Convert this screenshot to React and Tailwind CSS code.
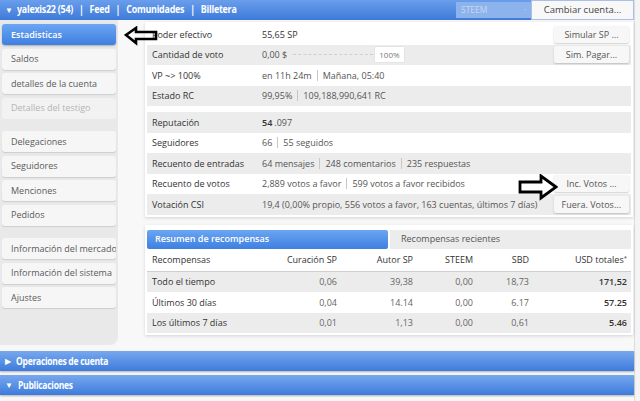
import React from 'react';

const font = { fontFamily: "'Open Sans', 'Liberation Sans', sans-serif" };

const Sep = () => <span className="inline-block w-px h-[11px] bg-[#c8c8c8] mx-[5px] align-[-2px]"></span>;

const SideBtn = ({ children, active, disabled, className = '' }) => (
  <div
    className={`mx-[2px] h-[21px] flex items-center pl-[9px] rounded-[3px] text-[9px] whitespace-nowrap overflow-hidden ${
      active
        ? 'bg-gradient-to-b from-[#6aa6f2] to-[#3f7fe0] text-white font-semibold shadow-[0_1px_2px_rgba(0,0,0,0.25)]'
        : disabled
        ? 'bg-[#f2f2f2] text-[#b5b5b5]'
        : 'bg-[#f6f6f6] text-[#5a5a5a] shadow-[0_1px_1px_rgba(0,0,0,0.12)]'
    } ${className}`}
  >
    {children}
  </div>
);

const Row = ({ label, gray, children, btn }) => (
  <div className={`h-[20.5px] flex items-center text-[9px] ${gray ? 'bg-[#ececec]' : 'bg-white'}`}>
    <div className="w-[115px] pl-[5px] text-[#333]">{label}</div>
    <div className="flex-1 flex items-center text-[#555] whitespace-nowrap">{children}</div>
    {btn && <SmallBtn>{btn}</SmallBtn>}
  </div>
);

const SmallBtn = ({ children }) => (
  <div className="mr-[2px] h-[17px] px-[8px] min-w-[75px] flex items-center justify-center bg-[#f7f7f7] text-[#555] text-[9px] rounded-[2px] shadow-[0_1px_2px_rgba(0,0,0,0.2)] whitespace-nowrap">
    {children}
  </div>
);

const rewardRows = [
  ['Todo el tiempo', '0,06', '39,38', '0,00', '18,73', '171,52', true],
  ['Últimos 30 días', '0,04', '14.14', '0,00', '6.17', '57.25', false],
  ['Los últimos 7 días', '0,01', '1,13', '0,00', '0,61', '5.46', true],
];

const cols = 'grid grid-cols-[130px_55px_76px_60px_56px_1fr] items-center pl-[5px] pr-[4px]';

const BlueBar = ({ children, open }) => (
  <div className="h-[20px] flex items-center pl-[5px] bg-gradient-to-b from-[#77a8ee] to-[#3d7bdb] text-white shadow-[0_1px_2px_rgba(0,0,0,0.3)]">
    <span className="text-[8px] mr-[5px]">{open ? '▼' : '▶'}</span>
    <span className="text-[10px] font-bold tracking-[-0.3px] scale-x-[0.85] origin-left whitespace-nowrap">{children}</span>
  </div>
);

export default function App() {
  return (
    <div style={font} className="relative w-[640px] h-[401px] overflow-hidden bg-[#f4f4f4]">
      <div className="w-[635px] h-full bg-[#f8f8f8] border-r border-[#dcdcdc]">
        {/* Top bar */}
        <div className="h-[20px] flex items-center bg-gradient-to-b from-[#6a9eec] to-[#3d7ad9] text-white">
          <div className="flex items-center pl-[5px] whitespace-nowrap">
            <span className="text-[8px] mr-[4px]">▼</span>
            <div className="flex items-center text-[10.5px] font-bold tracking-[-0.3px] scale-x-[0.85] origin-left">
              <span>yalexis22 (54)</span>
              <span className="mx-[7px]">|</span>
              <span>Feed</span>
              <span className="mx-[7px]">|</span>
              <span>Comunidades</span>
              <span className="mx-[7px]">|</span>
              <span>Billetera</span>
            </div>
          </div>
          <div className="ml-auto flex items-center h-full">
            <div className="w-[75px] h-[16px] flex items-center justify-between px-[5px] bg-[#8db3ec] text-[#c6d8f4] text-[8.5px]">
              <span>STEEM</span>
              <span>·</span>
            </div>
            <div className="w-[103px] h-[20px] flex items-center justify-center bg-[#f8f8f8] border border-[#a9c0e6] text-[#444] text-[9.5px]">
              Cambiar cuenta...
            </div>
          </div>
        </div>

        <div className="flex">
          {/* Sidebar */}
          <div className="w-[118px] h-[325px] bg-[#e9e9e9] rounded-br-[8px] pt-[4px] flex flex-col gap-[3.5px]">
            <SideBtn active>Estadisticas</SideBtn>
            <SideBtn>Saldos</SideBtn>
            <SideBtn>detalles de la cuenta</SideBtn>
            <SideBtn disabled>Detalles del testigo</SideBtn>
            <SideBtn className="mt-[9px]">Delegaciones</SideBtn>
            <SideBtn>Seguidores</SideBtn>
            <SideBtn>Menciones</SideBtn>
            <SideBtn>Pedidos</SideBtn>
            <SideBtn className="mt-[9px]">Información del mercado</SideBtn>
            <SideBtn>Información del sistema</SideBtn>
            <SideBtn>Ajustes</SideBtn>
          </div>

          {/* Main */}
          <div className="ml-[27px] w-[488px] pt-[2px]">
            <div className="bg-white p-[2px] shadow-[0_1px_3px_rgba(0,0,0,0.15)]">
              <Row label="Poder efectivo" btn="Simular SP ...">
                <span className="text-[#333]">55,65 SP</span>
              </Row>
              <Row label="Cantidad de voto" gray btn="Sim. Pagar...">
                <span>0,00 $</span>
                <span className="ml-[6px] w-[80px] border-t border-dashed border-[#cfcfcf]"></span>
                <span className="ml-[2px] px-[4px] h-[15px] flex items-center bg-white text-[8px] text-[#777] shadow-[0_0_1px_rgba(0,0,0,0.2)]">100%</span>
              </Row>
              <Row label="VP ~> 100%">
                en 11h 24m<Sep />Mañana, 05:40
              </Row>
              <Row label="Estado RC" gray>
                99,95%<Sep />109,188,990,641 RC
              </Row>
              <div className="h-[6px] bg-white"></div>
              <Row label="Reputación" gray>
                <span className="text-[#333] font-semibold">54</span>
                <span className="ml-[2px]">.097</span>
              </Row>
              <Row label="Seguidores">
                66<Sep />55 seguidos
              </Row>
              <Row label="Recuento de entradas" gray>
                64 mensajes<Sep />248 comentarios<Sep />235 respuestas
              </Row>
              <Row label="Recuento de votos" btn="Inc. Votos ...">
                2,889 votos a favor<Sep />599 votos a favor recibidos
              </Row>
              <Row label="Votación CSI" gray btn="Fuera. Votos...">
                19,4 (0,00% propio, 556 votos a favor, 163 cuentas, últimos 7 días)
              </Row>
            </div>

            {/* Rewards */}
            <div className="mt-[8px] bg-white p-[2px] shadow-[0_1px_3px_rgba(0,0,0,0.15)] text-[9px]">
              <div className="flex gap-[2px] mt-[3px]">
                <div className="w-[241px] h-[19px] flex items-center pl-[8px] bg-gradient-to-b from-[#6aa6f2] to-[#3f7fe0] text-white font-semibold rounded-[2px]">
                  Resumen de recompensas
                </div>
                <div className="flex-1 h-[19px] flex items-center pl-[11px] bg-[#ececec] text-[#555]">
                  Recompensas recientes
                </div>
              </div>
              <div className={`${cols} h-[23px] border-b border-[#cfcfcf] text-[#333]`}>
                <div>Recompensas</div>
                <div className="text-right">Curación SP</div>
                <div className="text-right">Autor SP</div>
                <div className="text-right">STEEM</div>
                <div className="text-right">SBD</div>
                <div className="text-right">USD totales<sup className="text-[6px]">*</sup></div>
              </div>
              {rewardRows.map(([a, b, c, d, e, f, gray]) => (
                <div key={a} className={`${cols} h-[20.5px] ${gray ? 'bg-[#ececec]' : 'bg-white'} text-[#666]`}>
                  <div className="text-[#333]">{a}</div>
                  <div className="text-right">{b}</div>
                  <div className="text-right">{c}</div>
                  <div className="text-right">{d}</div>
                  <div className="text-right">{e}</div>
                  <div className="text-right text-[#333] font-semibold">{f}</div>
                </div>
              ))}
            </div>
          </div>
        </div>

        <div className="mt-[6px] flex flex-col gap-[4px]">
          <BlueBar>Operaciones de cuenta</BlueBar>
          <BlueBar open>Publicaciones</BlueBar>
        </div>
      </div>

      {/* annotation arrows */}
      <svg className="absolute left-[124px] top-[26px]" width="34" height="20" viewBox="0 0 34 20">
        <polygon points="2,9 12,2 12,6 32,6 32,13 12,13 12,17" fill="none" stroke="#000" strokeWidth="2.6" strokeLinejoin="miter" />
      </svg>
      <svg className="absolute left-[518px] top-[174px]" width="40" height="27" viewBox="0 0 40 27">
        <polygon points="38,13 23,2 23,8 2,8 2,18 23,18 23,24" fill="none" stroke="#000" strokeWidth="2.8" strokeLinejoin="miter" />
      </svg>
    </div>
  );
}
